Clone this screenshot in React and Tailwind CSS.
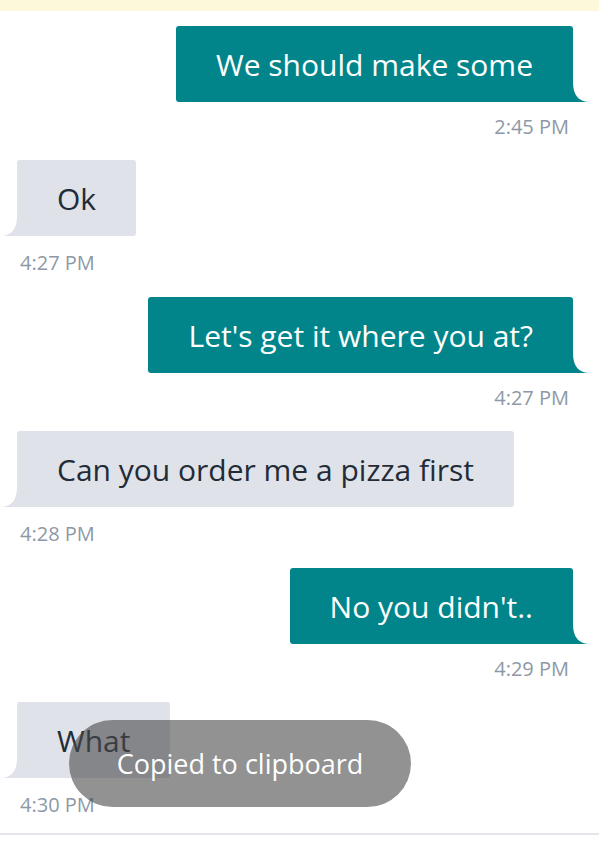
import React from "react";

const messages = [
  { id: 1, mine: true, text: "We should make some", time: "2:45 PM" },
  { id: 2, mine: false, text: "Ok", time: "4:27 PM" },
  { id: 3, mine: true, text: "Let's get it where you at?", time: "4:27 PM" },
  { id: 4, mine: false, text: "Can you order me a pizza first", time: "4:28 PM" },
  { id: 5, mine: true, text: "No you didn't..", time: "4:29 PM" },
  { id: 6, mine: false, text: "What", time: "4:30 PM" },
];

const Tail = ({ mine }) =>
  mine ? (
    <svg
      className="absolute bottom-0 -right-[17px] text-[#01858b]"
      width="17"
      height="20"
      viewBox="0 0 17 20"
    >
      <path d="M0 0 Q0 20 17 20 L0 20 Z" fill="currentColor" />
    </svg>
  ) : (
    <svg
      className="absolute bottom-0 -left-[17px] text-[#dfe2e9]"
      width="17"
      height="20"
      viewBox="0 0 17 20"
    >
      <path d="M17 0 Q17 20 0 20 L17 20 Z" fill="currentColor" />
    </svg>
  );

const Bubble = ({ mine, text, time }) => (
  <div
    className={
      mine
        ? "flex flex-col items-end mb-[20px] last:mb-0"
        : "flex flex-col items-start mb-[21px] last:mb-0"
    }
  >
    <div
      className={
        mine
          ? "relative h-[76px] flex items-center px-[40px] bg-[#01858b] text-white rounded-[3px] rounded-br-none"
          : "relative h-[76px] flex items-center px-[40px] bg-[#dfe2e9] text-[#222b36] rounded-[3px] rounded-bl-none"
      }
    >
      <span className="text-[30px] leading-none whitespace-nowrap pt-[2px]">{text}</span>
      <Tail mine={mine} />
    </div>
    <div
      className={
        mine
          ? "mt-[12px] h-[26px] leading-[26px] text-[20px] text-[#8d99a6] pr-[4px]"
          : "mt-[14px] h-[26px] leading-[26px] text-[20px] text-[#8d99a6] pl-[3px]"
      }
    >
      {time}
    </div>
  </div>
);

export default function App() {
  return (
    <div
      className="relative w-[599px] h-[842px] bg-white overflow-hidden flex flex-col"
      style={{ fontFamily: "'Open Sans', sans-serif" }}
    >
      <div className="h-[11px] shrink-0 bg-[#fef8db]" />
      <div className="shrink-0 flex flex-col pt-[15px] pl-[17px] pr-[26px]">
        {messages.map((m) => (
          <Bubble key={m.id} {...m} />
        ))}
      </div>
      <div className="mt-[15px] shrink-0 h-[9px] border-t-2 border-[#e2e5ea]" />

      {/* toast */}
      <div className="absolute left-[69px] top-[720px] w-[342px] h-[87px] rounded-full bg-[#494949]/60 flex items-center justify-center">
        <span className="text-white text-[27px] leading-none">Copied to clipboard</span>
      </div>
    </div>
  );
}
